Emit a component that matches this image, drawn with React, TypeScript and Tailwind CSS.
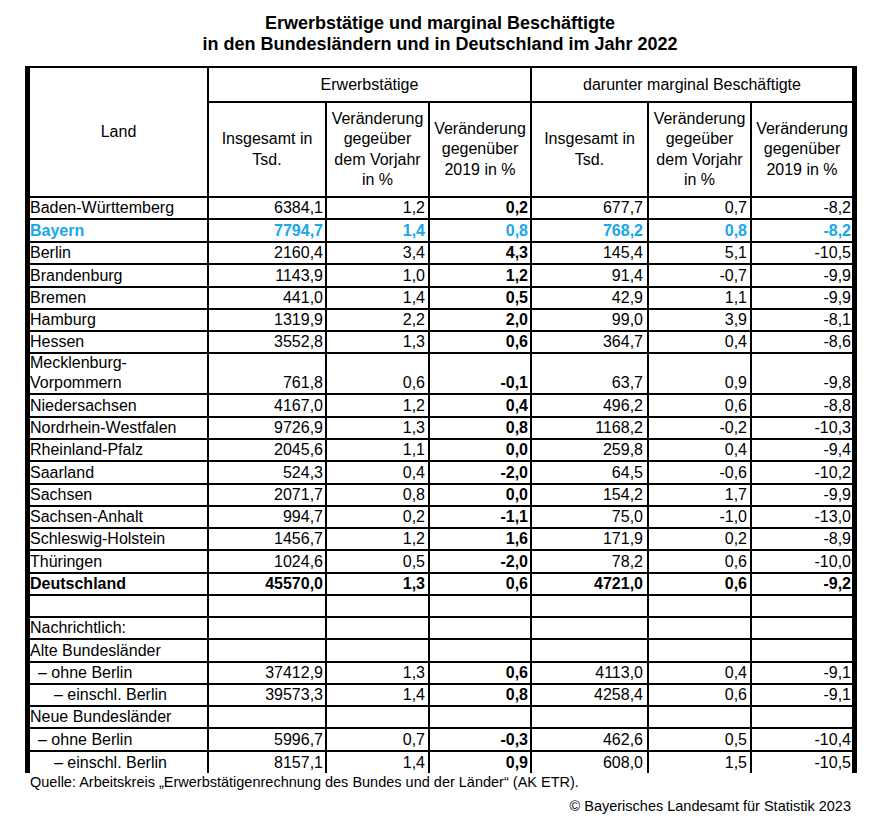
import React from "react";

type Row = {
  land: string;
  vals: string[];
  h: string;
  kind?: "blue" | "bold";
  indent?: 0 | 1 | 2;
};

const rows: Row[] = [
  { land: "Baden-Württemberg", vals: ["6384,1", "1,2", "0,2", "677,7", "0,7", "-8,2"], h: "h-[20px]" },
  { land: "Bayern", vals: ["7794,7", "1,4", "0,8", "768,2", "0,8", "-8,2"], h: "h-[21px]", kind: "blue" },
  { land: "Berlin", vals: ["2160,4", "3,4", "4,3", "145,4", "5,1", "-10,5"], h: "h-[20px]" },
  { land: "Brandenburg", vals: ["1143,9", "1,0", "1,2", "91,4", "-0,7", "-9,9"], h: "h-[21px]" },
  { land: "Bremen", vals: ["441,0", "1,4", "0,5", "42,9", "1,1", "-9,9"], h: "h-[20px]" },
  { land: "Hamburg", vals: ["1319,9", "2,2", "2,0", "99,0", "3,9", "-8,1"], h: "h-[20px]" },
  { land: "Hessen", vals: ["3552,8", "1,3", "0,6", "364,7", "0,4", "-8,6"], h: "h-[20px]" },
  { land: "Mecklenburg-\nVorpommern", vals: ["761,8", "0,6", "-0,1", "63,7", "0,9", "-9,8"], h: "h-[39px]" },
  { land: "Niedersachsen", vals: ["4167,0", "1,2", "0,4", "496,2", "0,6", "-8,8"], h: "h-[21px]" },
  { land: "Nordrhein-Westfalen", vals: ["9726,9", "1,3", "0,8", "1168,2", "-0,2", "-10,3"], h: "h-[20px]" },
  { land: "Rheinland-Pfalz", vals: ["2045,6", "1,1", "0,0", "259,8", "0,4", "-9,4"], h: "h-[20px]" },
  { land: "Saarland", vals: ["524,3", "0,4", "-2,0", "64,5", "-0,6", "-10,2"], h: "h-[21px]" },
  { land: "Sachsen", vals: ["2071,7", "0,8", "0,0", "154,2", "1,7", "-9,9"], h: "h-[20px]" },
  { land: "Sachsen-Anhalt", vals: ["994,7", "0,2", "-1,1", "75,0", "-1,0", "-13,0"], h: "h-[20px]" },
  { land: "Schleswig-Holstein", vals: ["1456,7", "1,2", "1,6", "171,9", "0,2", "-8,9"], h: "h-[20px]" },
  { land: "Thüringen", vals: ["1024,6", "0,5", "-2,0", "78,2", "0,6", "-10,0"], h: "h-[21px]" },
  { land: "Deutschland", vals: ["45570,0", "1,3", "0,6", "4721,0", "0,6", "-9,2"], h: "h-[20px]", kind: "bold" },
  { land: "", vals: ["", "", "", "", "", ""], h: "h-[20px]" },
  { land: "Nachrichtlich:", vals: ["", "", "", "", "", ""], h: "h-[20px]" },
  { land: "Alte Bundesländer", vals: ["", "", "", "", "", ""], h: "h-[21px]" },
  { land: "– ohne Berlin", vals: ["37412,9", "1,3", "0,6", "4113,0", "0,4", "-9,1"], h: "h-[20px]", indent: 1 },
  { land: "– einschl. Berlin", vals: ["39573,3", "1,4", "0,8", "4258,4", "0,6", "-9,1"], h: "h-[20px]", indent: 2 },
  { land: "Neue Bundesländer", vals: ["", "", "", "", "", ""], h: "h-[20px]" },
  { land: "– ohne Berlin", vals: ["5996,7", "0,7", "-0,3", "462,6", "0,5", "-10,4"], h: "h-[21px]", indent: 1 },
  { land: "– einschl. Berlin", vals: ["8157,1", "1,4", "0,9", "608,0", "1,5", "-10,5"], h: "h-[21px]", indent: 2 },
];

const padR = ["pr-[2px]", "pr-[3px]", "pr-[2px]", "pr-[4px]", "pr-[3px]", "pr-[1px]"];

function HeadCell({ lines }: { lines: string[] }) {
  return (
    <div className="h-[93px] bg-white flex items-center justify-center text-center leading-[20.3px]">
      <div>
        {lines.map((l, i) => (
          <div key={i}>{l}</div>
        ))}
      </div>
    </div>
  );
}

export default function App() {
  const ins = ["Insgesamt in", "Tsd."];
  const vj = ["Veränderung", "gegeüber", "dem Vorjahr", "in %"];
  const v19 = ["Veränderung", "gegenüber", "2019 in %"];
  return (
    <div className="w-[880px] h-[827px] bg-white text-black font-['Liberation_Sans',Arial,sans-serif]">
      <div className="pt-[13px] text-center font-bold text-[18px] leading-[21px]">
        <div>Erwerbstätige und marginal Beschäftigte</div>
        <div>in den Bundesländern und in Deutschland im Jahr 2022</div>
      </div>
      <div className="ml-[25px] mt-[11px] w-[832px] border-t-2 border-l-[5px] border-r-[5px] border-black">
        <div className="grid grid-cols-[177px_116px_101px_100px_115px_101px_100px] gap-[2px] bg-black text-[16px] leading-[20px]">
          <div className="row-span-2 bg-white flex items-center justify-center">Land</div>
          <div className="col-span-3 h-[33px] bg-white flex items-center justify-center">Erwerbstätige</div>
          <div className="col-span-3 h-[33px] bg-white flex items-center justify-center">darunter marginal Beschäftigte</div>
          <HeadCell lines={ins} />
          <HeadCell lines={vj} />
          <HeadCell lines={v19} />
          <HeadCell lines={ins} />
          <HeadCell lines={vj} />
          <HeadCell lines={v19} />
          {rows.map((r, ri) => {
            const tone =
              r.kind === "blue"
                ? "font-bold text-[#1aa6ea]"
                : r.kind === "bold"
                ? "font-bold"
                : "";
            const ind = r.indent === 1 ? "pl-[8px]" : r.indent === 2 ? "pl-[24px]" : "pl-0";
            return (
              <React.Fragment key={ri}>
                <div className={`${r.h} ${tone} ${ind} bg-white flex items-end whitespace-pre-line`}>
                  {r.land}
                </div>
                {r.vals.map((v, ci) => (
                  <div
                    key={ci}
                    className={`${r.h} ${tone} ${ci === 2 ? "font-bold" : ""} ${padR[ci]} bg-white flex items-end justify-end`}
                  >
                    {v}
                  </div>
                ))}
              </React.Fragment>
            );
          })}
        </div>
      </div>
      <div className="ml-[25px] w-[832px] text-[14.5px] leading-[18px]">
        <div className="pl-[5px]">
          Quelle: Arbeitskreis „Erwerbstätigenrechnung des Bundes und der Länder“ (AK ETR).
        </div>
        <div className="mt-[6px] text-right pr-[6px]">© Bayerisches Landesamt für Statistik 2023</div>
      </div>
    </div>
  );
}
